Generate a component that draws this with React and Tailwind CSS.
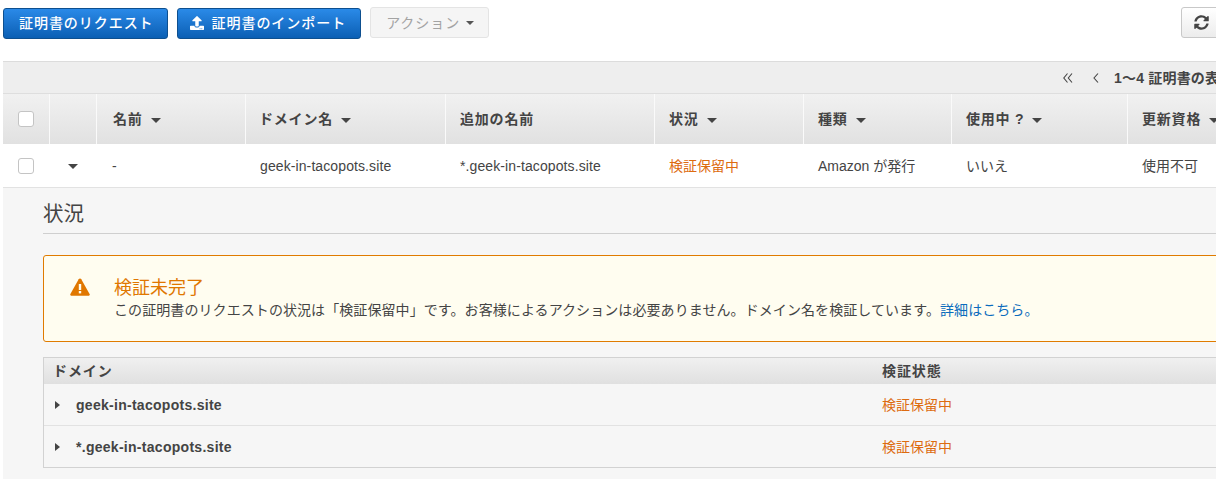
import { FaSyncAlt, FaUpload } from 'react-icons/fa';

const font = { fontFamily: '"Liberation Sans", "Noto Sans CJK JP", sans-serif' };

const columns = 'grid grid-cols-[46px_47px_149px_200px_209px_149px_148px_176px_200px]';

const headers = [
  { label: '', sort: false, pad: 'pl-[15px]' },
  { label: '', sort: false, pad: 'pl-[14px] border-l border-[#fafafa]' },
  { label: '名前', sort: true, pad: 'pl-[16px] border-l border-[#fafafa]' },
  { label: 'ドメイン名', sort: true, pad: 'pl-[13px] border-l border-[#fafafa]' },
  { label: '追加の名前', sort: false, pad: 'pl-[14px] border-l border-[#fafafa]' },
  { label: '状況', sort: true, pad: 'pl-[14px] border-l border-[#fafafa]' },
  { label: '種類', sort: true, pad: 'pl-[14px] border-l border-[#fafafa]' },
  { label: '使用中 ?', sort: true, pad: 'pl-[14px] border-l border-[#fafafa]' },
  { label: '更新資格', sort: true, pad: 'pl-[14px] border-l border-[#fafafa]' },
];

const CaretDown = ({ className = '' }) => (
  <span className={`inline-block w-0 h-0 border-x-[5px] border-x-transparent border-t-[5px] border-t-[#444] ${className}`} />
);

const CaretRight = () => (
  <span className="inline-block w-0 h-0 border-y-[4px] border-y-transparent border-l-[5px] border-l-[#444]" />
);

const Checkbox = () => (
  <span className="block w-4 h-4 rounded-[3px] border border-[#c4c4c4] bg-white" />
);

const PrimaryButton = ({ className, children }) => (
  <button className={`h-[31px] pb-0.5 flex items-center rounded-[3px] border border-[#0d4f8f] bg-gradient-to-b from-[#2a8ae8] to-[#0a5fb4] text-white text-sm font-medium tracking-[0.95px] whitespace-nowrap ${className}`}>
    {children}
  </button>
);

const domains = ['geek-in-tacopots.site', '*.geek-in-tacopots.site'];

export default function App() {
  return (
    <div className="w-[1216px] h-[479px] overflow-hidden bg-white pl-[3px] text-[#444]" style={font}>
      <div className="h-[61px] pt-2 flex items-start gap-[9px]">
        <PrimaryButton className="pl-[15px] pr-[13px]">証明書のリクエスト</PrimaryButton>
        <PrimaryButton className="pl-3 pr-[14px]">
          <FaUpload className="text-[14px] mr-2" />
          証明書のインポート
        </PrimaryButton>
        <button className="h-[31px] -mt-px pl-[15px] pr-[14px] flex items-center gap-[6px] rounded-[3px] border border-[#e4e4e4] bg-[#f5f5f5] text-[#a3a3a3] text-sm tracking-[0.95px]">
          アクション
          <span className="inline-block w-0 h-0 border-x-[4px] border-x-transparent border-t-[4px] border-t-[#555]" />
        </button>
        <button className="absolute left-[1181px] top-[7px] w-[50px] h-[31px] pl-3 flex items-center rounded-[3px] border border-[#c8c8c8] bg-gradient-to-b from-white to-[#ececec] text-[#444]">
          <FaSyncAlt className="text-[15px]" />
        </button>
      </div>

      <div className="w-[1400px]">
        <div className="h-[32px] border-t border-[#dcdcdc] bg-[#eeeeee] relative">
          <div className="absolute left-[1060px] top-0 h-full flex items-center whitespace-nowrap text-sm text-[#444]">
            <svg viewBox="0 0 10 10" className="w-[10px] h-[10px] mr-5 mt-px fill-none stroke-[#444] stroke-[1.1]">
              <path d="M4.5 0.5L0.8 5l3.7 4.5M9 0.5L5.3 5 9 9.5" />
            </svg>
            <svg viewBox="0 0 6 10" className="w-[6px] h-[10px] mr-[15px] mt-px fill-none stroke-[#444] stroke-[1.1]">
              <path d="M5 0.5L1 5l4 4.5" />
            </svg>
            <span className="font-bold tracking-[0.2px]">1〜4 証明書の表示</span>
          </div>
        </div>

        <div className={`${columns} h-[51px] border-t border-[#dedede] bg-gradient-to-b from-[#f1f1f1] to-[#e1e1e1]`}>
          {headers.map((h, i) => (
            <div key={i} className={`flex items-center text-sm font-bold tracking-[0.8px] whitespace-nowrap ${h.pad}`}>
              {i === 0 && <Checkbox />}
              {h.label}
              {h.sort && <CaretDown className="ml-[8px] mt-0.5" />}
            </div>
          ))}
        </div>

        <div className={`${columns} h-[44px] border-b border-[#e2e2e2] bg-white text-sm items-center whitespace-nowrap`}>
          <div className="px-[15px]"><Checkbox /></div>
          <div className="pl-[19px] pt-0.5 flex"><CaretDown /></div>
          <div className="px-[16px]">-</div>
          <div className="px-[15px] tracking-[0.1px]">geek-in-tacopots.site</div>
          <div className="px-[15px] tracking-[0.1px]">*.geek-in-tacopots.site</div>
          <div className="px-[15px] text-[#dd6b10]">検証保留中</div>
          <div className="px-[15px]">Amazon が発行</div>
          <div className="px-[15px]">いいえ</div>
          <div className="px-[15px]">使用不可</div>
        </div>

        <div className="h-[291px] bg-[#f6f6f6] pl-10">
          <h2 className="h-[46px] border-b border-[#cfcfcf] text-[20.5px] leading-[52px]">状況</h2>

          <div className="mt-[21px] h-[87px] flex rounded-[3px] border border-[#e07b00] bg-[#fffdf0] pl-[26px] pt-[20px]">
            <svg viewBox="0 0 20 18" className="w-5 h-[18px] mt-0.5 fill-[#e07700]">
              <path d="M10 0.5c.6 0 1 .3 1.3.8l8.3 14.6c.5.9-.1 1.9-1.1 1.9H1.5c-1 0-1.6-1-1.1-1.9L8.7 1.3C9 .8 9.4.5 10 .5z" />
              <rect x="8.8" y="6" width="2.4" height="6" fill="#fffdf0" />
              <rect x="8.8" y="13" width="2.4" height="2.4" fill="#fffdf0" />
            </svg>
            <div className="ml-6">
              <div className="text-[18px] leading-[24px] text-[#e07700]">検証未完了</div>
              <div className="text-sm leading-[20px] tracking-[0.08px] whitespace-nowrap">
                この証明書のリクエストの状況は「検証保留中」です。お客様によるアクションは必要ありません。ドメイン名を検証しています。
                <span className="text-[#0b6cbd]">詳細はこちら。</span>
              </div>
            </div>
          </div>

          <div className="mt-[15px] border border-[#d2d2d2]">
            <div className="h-[26px] grid grid-cols-[838px_1fr] items-center bg-gradient-to-b from-[#f0f0f0] to-[#e0e0e0] text-sm font-bold tracking-[0.9px]">
              <div className="pl-[9px]">ドメイン</div>
              <div>検証状態</div>
            </div>
            {domains.map((d, i) => (
              <div key={d} className={`grid grid-cols-[838px_1fr] items-center text-sm ${i > 0 ? 'h-[42px] border-t border-[#e2e2e2]' : 'h-[41px]'}`}>
                <div className="pl-[11px] flex items-center font-bold">
                  <CaretRight />
                  <span className="ml-4 tracking-[0.28px]">{d}</span>
                </div>
                <div className="text-[#dd6b10]">検証保留中</div>
              </div>
            ))}
          </div>
        </div>
      </div>
    </div>
  );
}
